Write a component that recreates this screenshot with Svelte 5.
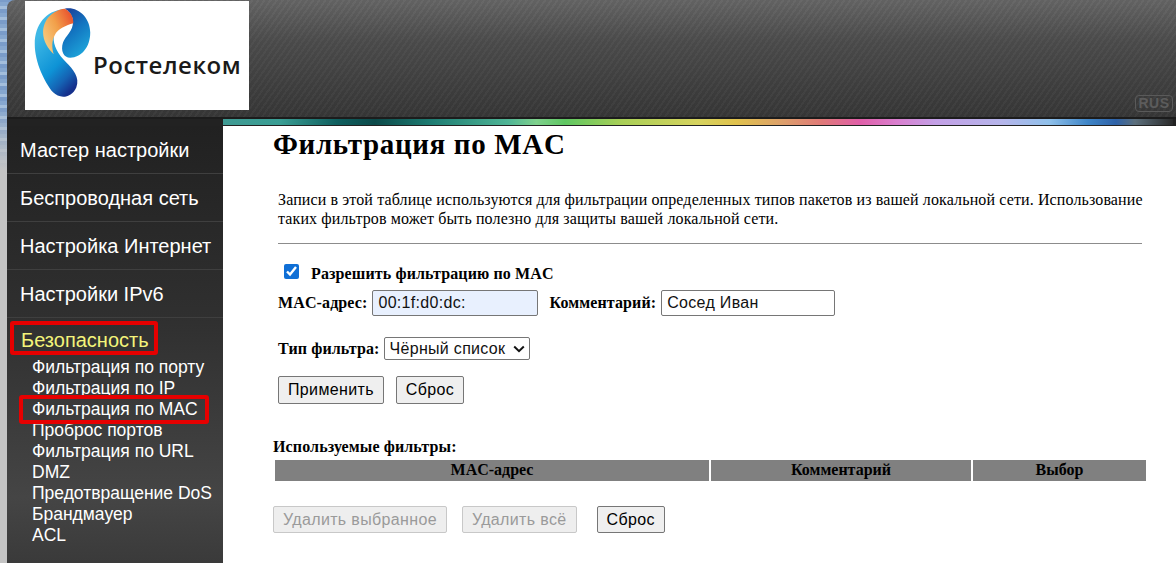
<script>
  const menu = ['Мастер настройки', 'Беспроводная сеть', 'Настройка Интернет', 'Настройки IPv6'];
  const sub = [
    'Фильтрация по порту',
    'Фильтрация по IP',
    'Фильтрация по MAC',
    'Проброс портов',
    'Фильтрация по URL',
    'DMZ',
    'Предотвращение DoS',
    'Брандмауер',
    'ACL'
  ];
</script>

<div class="page">
  <div class="frame">
    <header class="top">
      <div class="logo">
        <svg class="mark" viewBox="100 20 180 280" aria-hidden="true">
          <defs>
            <linearGradient id="blue" x1="0.3" y1="0.2" x2="0.7" y2="1">
              <stop offset="0" stop-color="#3fb8e6" />
              <stop offset="0.55" stop-color="#0e93d6" />
              <stop offset="0.8" stop-color="#1563b4" />
              <stop offset="1" stop-color="#15308c" />
            </linearGradient>
            <linearGradient id="lobe" x1="0.2" y1="0" x2="0.7" y2="1">
              <stop offset="0" stop-color="#1a3f98" />
              <stop offset="0.45" stop-color="#1274c0" />
              <stop offset="1" stop-color="#1fa8dc" />
            </linearGradient>
            <linearGradient id="warm" x1="0" y1="0.8" x2="1" y2="0.1">
              <stop offset="0" stop-color="#f7cf86" />
              <stop offset="0.5" stop-color="#f2a04a" />
              <stop offset="1" stop-color="#e8482a" />
            </linearGradient>
          </defs>
          <path fill="url(#blue)" d="M190 30C140 35 105 75 105 135C105 190 135 250 160 280C180 300 215 298 230 265C242 235 220 210 200 190C175 165 160 140 162 112C165 95 180 80 215 70L222 40Z" />
          <path fill="url(#lobe)" d="M195 28C235 20 272 55 272 100C272 145 245 175 212 176C192 176 182 155 190 130C197 110 222 95 220 65C218 45 210 35 195 28Z" />
          <path fill="url(#warm)" d="M195 28C160 32 130 60 130 100C130 125 145 150 162 165C156 145 156 125 165 108C175 88 200 78 221 72C222 55 215 38 195 28Z" />
        </svg>
        <span class="brand">Ростелеком</span>
      </div>
      <span class="lang">RUS</span>
    </header>
    <div class="rainbow-row"><div class="rainbow"></div></div>

    <div class="body">
      <nav class="side">
        {#each menu as item}
          <div class="item">{item}</div>
        {/each}
        <div class="item last"><span class="current marked">Безопасность</span></div>
        <ul class="sub">
          {#each sub as s, i}
            <li class:marked={i === 2}>{s}</li>
          {/each}
        </ul>
      </nav>

      <main class="content">
        <h1>Фильтрация по MAC</h1>
        <p class="intro">Записи в этой таблице используются для фильтрации определенных типов пакетов из вашей локальной сети. Использование таких фильтров может быть полезно для защиты вашей локальной сети.</p>
        <hr />
        <label class="enable"><input type="checkbox" checked /><b>Разрешить фильтрацию по MAC</b></label>
        <div class="row fields">
          <b>MAC-адрес:</b>
          <input class="text mac" type="text" value="00:1f:d0:dc:" />
          <b class="second">Комментарий:</b>
          <input class="text note" type="text" value="Сосед Иван" />
        </div>
        <div class="row filter">
          <b>Тип фильтра:</b>
          <span class="select">
            <select><option>Чёрный список</option></select>
            <svg class="chevron" width="12" height="8" viewBox="0 0 12 8" aria-hidden="true">
              <path d="M1.2 1.5 6 6.2l4.8-4.7" fill="none" stroke="#111" stroke-width="2" />
            </svg>
          </span>
        </div>
        <div class="row actions">
          <button>Применить</button>
          <button>Сброс</button>
        </div>
        <h2>Используемые фильтры:</h2>
        <table>
          <thead>
            <tr><th class="c1">MAC-адрес</th><th class="c2">Комментарий</th><th class="c3">Выбор</th></tr>
          </thead>
        </table>
        <div class="row bottom">
          <button disabled>Удалить выбранное</button>
          <button disabled>Удалить всё</button>
          <button>Сброс</button>
        </div>
      </main>
    </div>
  </div>
</div>

<style>
  :global(body) {
    margin: 0;
    overflow: hidden;
    background: #fff;
  }

  .page {
    width: 1176px;
    height: 563px;
    overflow: hidden;
    padding-left: 7px;
    box-sizing: border-box;
    background:
      linear-gradient(180deg, rgba(200, 200, 200, 0) 0 105px, #c4c4c4 170px),
      repeating-linear-gradient(0deg, #7a9cc9 0 4px, #a3bedc 4px 7px, #86a7cf 7px 11px);
    font-family: "Liberation Serif", serif;
    color: #000;
  }

  .frame {
    height: 563px;
    display: flex;
    flex-direction: column;
  }

  .top {
    height: 119px;
    flex: none;
    box-sizing: border-box;
    padding: 1px 0 0 18px;
    position: relative;
    border-top-left-radius: 8px;
    background:
      repeating-linear-gradient(125deg, rgba(255, 255, 255, 0.025) 0 2px, rgba(0, 0, 0, 0.03) 2px 5px),
      linear-gradient(180deg, #656565 0, #4c4c4c 35%, #373737 100%);
    border-bottom: 2px solid #1c1c1c;
  }

  .logo {
    width: 224px;
    height: 109px;
    background: #fff;
    position: relative;
  }

  .mark {
    position: absolute;
    left: 8px;
    top: 5px;
    width: 60px;
    height: 93px;
  }

  .brand {
    position: absolute;
    left: 68px;
    top: 48px;
    font: 600 24px/32px "Open Sans", sans-serif;
    letter-spacing: 0.5px;
    color: #1a1a1a;
  }

  .lang {
    position: absolute;
    right: 3px;
    bottom: 5px;
    width: 38px;
    height: 17px;
    box-sizing: border-box;
    border: 1px solid #5a5a5a;
    border-radius: 4px;
    color: #5c5c5c;
    font: 700 14px/15px "Liberation Sans", sans-serif;
    text-align: center;
    letter-spacing: 0.5px;
  }

  .rainbow-row {
    height: 7px;
    flex: none;
    background: #222;
    padding-left: 216px;
    padding-right: 3px;
  }

  .rainbow {
    height: 6px;
    background: linear-gradient(90deg,
      #3f9a93 0, #3a9e94 6%, #0f5f5f 12%, #0c4a4a 16%, #1e7d73 22%, #4fb596 30%,
      #7ed08c 33%, #5fc762 36%, #a9cf57 42%, #d6d35f 50%, #e0c24d 54%, #dd9f6c 59%,
      #e07a78 63%, #e05fa8 67%, #d97fcf 71%, #c3a0e6 75%, #b5b5ea 82%, #8fc0ea 87%,
      #3f86c8 91%, #2e62a8 94%, #5c6f7c 96%, #2a2a2a 100%);
  }

  .body {
    flex: 1;
    display: flex;
    min-height: 0;
  }

  .side {
    width: 216px;
    flex: none;
    background: linear-gradient(180deg, #212121 0, #303030 45%, #454545 85%, #3a3a3a 100%);
    font-family: "Liberation Sans", sans-serif;
    color: #fff;
  }

  .item {
    height: 48px;
    box-sizing: border-box;
    padding-left: 13px;
    font-size: 20px;
    line-height: 48px;
    border-bottom: 1px solid #3f3f3f;
  }

  .item.last {
    height: 39px;
    border-bottom: 0;
    line-height: 44px;
    padding-left: 14px;
  }

  .current {
    color: #f4f47a;
  }

  .marked {
    position: relative;
  }

  .marked::after {
    content: "";
    position: absolute;
    border: 4px solid #e60000;
    border-radius: 3px;
    box-sizing: border-box;
    pointer-events: none;
  }

  .current.marked::after {
    left: -11px;
    right: -9px;
    top: -8px;
    bottom: -4px;
  }

  .sub {
    list-style: none;
    margin: 0;
    padding: 0 0 0 25px;
    font-size: 17.5px;
    line-height: 21px;
  }

  .sub li.marked {
    width: fit-content;
  }

  .sub li.marked::after {
    left: -13px;
    right: -11px;
    top: -4px;
    bottom: -4px;
  }

  .content {
    flex: 1;
    background: #fff;
    padding: 2px 30px 0 50px;
    box-sizing: border-box;
    min-width: 0;
    font-size: 16px;
    letter-spacing: 0.12px;
  }

  h1 {
    margin: 0;
    font-size: 29px;
    line-height: 32px;
    font-weight: 700;
    letter-spacing: 0.65px;
  }

  .intro {
    margin: 30px 0 0 5px;
    line-height: 19px;
  }

  hr {
    margin: 15px 4px 0 5px;
    border: 0;
    border-top: 1px solid #8c8c8c;
    height: 0;
  }

  .enable {
    display: flex;
    align-items: center;
    margin: 18px 0 0 11px;
    height: 22px;
  }

  .enable b {
    margin-top: 2px;
  }

  .enable input {
    width: 15px;
    height: 15px;
    margin: -4px 12px 0 0;
    accent-color: #0f6fd6;
  }

  .row {
    display: flex;
    align-items: center;
  }

  .fields {
    margin: 5px 0 0 5px;
    height: 27px;
  }

  .text {
    height: 26px;
    box-sizing: border-box;
    border: 1px solid #767676;
    border-radius: 2px;
    padding: 0 5px;
    font: 16px "Liberation Sans", sans-serif;
    letter-spacing: 0.3px;
    color: #111;
    outline: 0;
  }

  .mac {
    width: 166px;
    margin-left: 5px;
    background: #e8f0fe;
  }

  .note {
    width: 174px;
    margin-left: 5px;
    background: #fff;
  }

  .second {
    margin-left: 11px;
  }

  .filter {
    margin: 20px 0 0 5px;
    height: 25px;
  }

  .select {
    position: relative;
    display: block;
    margin-left: 4px;
    height: 23px;
  }

  select {
    display: block;
    appearance: none;
    width: 146px;
    height: 23px;
    box-sizing: border-box;
    border: 1px solid #767676;
    border-radius: 2px;
    background: #fff;
    font: 16px "Liberation Sans", sans-serif;
    letter-spacing: 0.3px;
    color: #111;
    padding: 0 0 0 5px;
  }

  .chevron {
    position: absolute;
    right: 5px;
    top: 8px;
    pointer-events: none;
  }

  .actions {
    margin: 15px 0 0 5px;
    gap: 12px;
  }

  button {
    height: 28px;
    box-sizing: border-box;
    padding: 0 9px;
    border: 1px solid #767676;
    border-radius: 2px;
    background: #efefef;
    font: 16px "Liberation Sans", sans-serif;
    letter-spacing: 0.35px;
    color: #000;
  }

  button:disabled {
    border-color: #c8c8c8;
    background: #eeeeee;
    color: #9a9a9a;
  }

  h2 {
    margin: 33px 0 0;
    font-size: 16px;
    line-height: 19px;
    font-weight: 700;
  }

  table {
    margin: 4px 0 0 2px;
    width: 871px;
    border-collapse: separate;
    border-spacing: 0;
    table-layout: fixed;
  }

  th {
    height: 21px;
    padding: 0 0 1px;
    background: #808080;
    font-size: 16px;
    line-height: 20px;
    letter-spacing: 0;
    border-left: 2px solid #fff;
    box-sizing: border-box;
  }

  th.c1 {
    width: 434px;
    border-left: 0;
  }

  th.c2 {
    width: 262px;
  }

  .bottom {
    margin-top: 25px;
  }

  .bottom button {
    height: 27px;
  }

  .bottom button:nth-child(2) {
    margin-left: 15px;
  }

  .bottom button:nth-child(3) {
    margin-left: 20px;
  }
</style>
